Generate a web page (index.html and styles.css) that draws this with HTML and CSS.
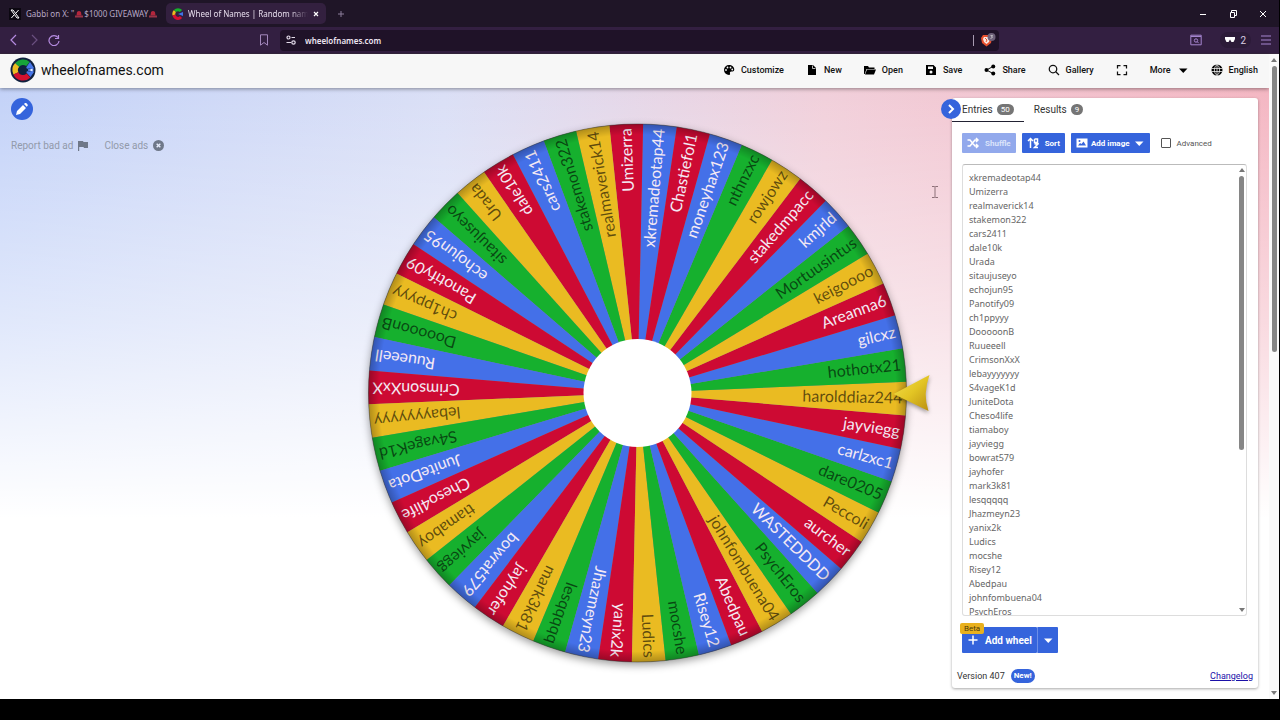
FILE: index.html
```html
<!DOCTYPE html>
<html lang="en">
<head>
    <meta charset="UTF-8">
    <meta name="viewport" content="width=device-width, initial-scale=1.0">
    <title>Wheel of Names | Random name picker</title>
    <link rel="stylesheet" href="styles.css">
</head>
<body>
    <div class="tabs">
        <div class="tab">
            <svg class="tab-icon" viewBox="0 0 12 12"><rect width="12" height="12" fill="#0b0710"/><path d="M2 2h2l6 8H8zM9.600 2 6.800 5.200M5 7 2.400 10" fill="none" stroke="#fff" stroke-width="1"/></svg>
            <span>Gabbi on X: "</span>
            <svg class="siren" viewBox="0 0 8 8"><path d="M1.500 5.500 2 2q2-2 4 0l.5 3.500z" fill="#b3263c"/><path d="M0 5.500h8v2H0z" fill="#9a3347"/></svg>
            <span>$1000 GIVEAWAY</span>
            <svg class="siren" viewBox="0 0 8 8"><path d="M1.500 5.500 2 2q2-2 4 0l.5 3.500z" fill="#b3263c"/><path d="M0 5.500h8v2H0z" fill="#9a3347"/></svg>
        </div>
        <div class="tab active">
            <svg class="tab-icon" viewBox="0 0 12 12" fill="none" stroke-width="3"><path d="M2 7a4 4 0 0 1 1-4" stroke="#efb91d"/><path d="M3 3a4 4 0 0 1 6 0" stroke="#15b32b"/><path d="M2 7a4 4 0 0 0 7 2" stroke="#d50f31"/><path d="M6 6l5-2v4z" fill="#3f73ea"/></svg>
            <span class="tab-title">Wheel of Names | Random nam</span>
            <button class="plain" aria-label="Close tab"><svg width="8" height="8" viewBox="0 0 8 8"><path d="M2 2l4 4M6 2 2 6" stroke="#fff" stroke-width="1.200"/></svg></button>
        </div>
        <button class="plain new-tab" aria-label="New tab"><svg width="8" height="8" viewBox="0 0 8 8"><path d="M4 1v6M1 4h6" stroke="#8d7f9c"/></svg></button>
        <div class="window-buttons">
            <button class="plain" aria-label="Minimize"><svg width="10" height="10" viewBox="0 0 10 10"><path d="M2 5.500h6" stroke="#fff"/></svg></button>
            <button class="plain" aria-label="Restore"><svg width="10" height="10" viewBox="0 0 10 10" fill="none" stroke="#fff"><path d="M2.500 3.500h4v5h-4zM3.500 3V1.500h5v5H7"/></svg></button>
            <button class="plain" aria-label="Close"><svg width="10" height="10" viewBox="0 0 10 10"><path d="M2 2l6 6M8 2 2 8" stroke="#fff"/></svg></button>
        </div>
    </div>

    <div class="toolbar">
        <div class="toolbar-left">
            <button class="plain" aria-label="Back"><svg width="12" height="12" viewBox="0 0 12 12"><path d="M8 1 3 6l5 5" fill="none" stroke="#b58be0" stroke-width="1.200"/></svg></button>
            <button class="plain" aria-label="Forward"><svg width="12" height="12" viewBox="0 0 12 12"><path d="M4 1l5 5-5 5" fill="none" stroke="#6b5080" stroke-width="1.200"/></svg></button>
            <button class="plain" aria-label="Reload"><svg width="12" height="12" viewBox="0 0 12 12"><path d="M10 3.500A5 5 0 1 0 11 7M10.500 1v3.500H7" fill="none" stroke="#b58be0" stroke-width="1.200"/></svg></button>
            <button class="plain bookmark" aria-label="Bookmark"><svg width="12" height="12" viewBox="0 0 12 12"><path d="M2.500.8h7v10.400L6 8.500l-3.500 2.700z" fill="none" stroke="#a488bd"/></svg></button>
        </div>
        <div class="address">
            <svg width="12" height="12" viewBox="0 0 12 12" fill="none" stroke="#e4dcea" stroke-width="1.200"><circle cx="3.500" cy="3.500" r="1.500"/><path d="M6.500 3.500H10M1.500 8.500H6"/><circle cx="8.500" cy="8.500" r="1.700"/></svg>
            <input class="url" type="text" value="wheelofnames.com" aria-label="Address">
            <svg width="26" height="14" viewBox="0 0 26 14"><path d="M2.500 2v11" stroke="#a89bb1"/><path d="M12 2h7l2 3-1 5-4.500 3.500L11 10l-1-5z" fill="#e8502d"/><path d="M13 4h5l1 2-1 3-2.500 2L13 9l-1-3z" fill="#fbe9e2"/><path d="M14 5l2 2-1 2" stroke="#e8502d" fill="none"/><circle cx="20.500" cy="4" r="4" fill="#6e6179"/><path d="M19.500 2.500h2l-1 1.500h1l-2 2" fill="none" stroke="#ddd" stroke-width=".7"/></svg>
        </div>
        <div class="toolbar-right">
            <svg width="12" height="12" viewBox="0 0 12 12" fill="none" stroke="#a585cf"><path d="M.8 1.200h10.400v9.600H.8zM1 2.500h10"/><circle cx="6" cy="6.500" r="1.700"/><path d="M7.200 7.700 8.700 9.200"/></svg>
            <div class="private"><svg width="10" height="6" viewBox="0 0 10 6"><path d="M0 0h10v2L8.500 5h-2L5 2.500 3.500 5h-2L0 2z" fill="#fff"/></svg><span>2</span></div>
            <button class="plain" aria-label="Menu"><svg width="12" height="12" viewBox="0 0 12 12"><path d="M1 2h10M1 6h10M1 10h10" stroke="#a585cf" stroke-width="1.200"/></svg></button>
        </div>
    </div>

    <div class="viewport">
        <div class="page">
            <header class="app-bar">
                <a class="brand" href="#">
                    <svg width="26" height="26" viewBox="0 0 26 26"><circle cx="13" cy="13" r="12.500" fill="#10213f"/><g fill="none" stroke-width="5.500"><path d="M5.900 16.300A7.800 7.800 0 0 1 7.200 7.800" stroke="#edbd22"/><path d="M7.200 7.800A7.800 7.800 0 0 1 18 7" stroke="#17a43a"/><path d="M5.900 16.300A7.800 7.800 0 0 0 18.500 18.500" stroke="#d3112f"/></g><path d="M15 12 20 5l4 6zM15 14l9 1-3.500 5z" fill="#4876e8"/><circle cx="13" cy="13" r="4" fill="#10213f"/><path d="M18 13l5-2v4z" fill="#fff" stroke="#4876e8"/></svg>
                    <span>wheelofnames.com</span>
                </a>
                <nav class="menu">
                    <button class="menu-item"><svg class="icon" viewBox="0 0 24 24"><path d="M12 2a10 10 0 1 0 0 20c2 0 2.600-1.500 2-3-.8-2 .2-4 2.500-4H19c2 0 3.500-1.500 3.500-4C22.500 6 18 2 12 2z"/><g fill="#f7f7f7"><circle cx="6" cy="12" r="1.800"/><circle cx="9" cy="7" r="1.800"/><circle cx="15" cy="7" r="1.800"/><circle cx="18.500" cy="11" r="1.800"/></g></svg>Customize</button>
                    <button class="menu-item"><svg class="icon" viewBox="0 0 24 24"><path d="M4 2h10l6 6v14H4z"/><path d="M13 3v6h6" fill="none" stroke="#f7f7f7" stroke-width="1.500"/></svg>New</button>
                    <button class="menu-item"><svg class="icon" viewBox="0 0 24 24"><path d="M0 4h8l2 3h11v3H5L1.500 20H0zM6 11h18l-4 10H2z"/></svg>Open</button>
                    <button class="menu-item"><svg class="icon" viewBox="0 0 24 24"><path fill-rule="evenodd" d="M2 2h15l5 5v15H2zm4 3v5h10V5zm6 8a3 3 0 1 0 0 6 3 3 0 0 0 0-6z"/></svg>Save</button>
                    <button class="menu-item"><svg class="icon" viewBox="0 0 24 24"><path d="M5 12 18 5M5 12l13 7" stroke="#111" stroke-width="2"/><circle cx="5" cy="12" r="4"/><circle cx="18.500" cy="5" r="4"/><circle cx="18.500" cy="19" r="4"/></svg>Share</button>
                    <button class="menu-item"><svg class="icon" viewBox="0 0 24 24" fill="none" stroke="#111" stroke-width="2.500"><circle cx="10" cy="10" r="7.500"/><path d="M15.500 15.500 22 22"/></svg>Gallery</button>
                    <button class="menu-item" aria-label="Fullscreen"><svg class="icon" viewBox="0 0 24 24" fill="none" stroke="#111" stroke-width="2.500"><path d="M3 9V3h6M15 3h6v6M21 15v6h-6M9 21H3v-6"/></svg></button>
                    <button class="menu-item">More<svg class="icon" viewBox="0 0 24 24"><path d="M4 9h17l-8.500 9z"/></svg></button>
                    <button class="menu-item"><svg class="icon" viewBox="0 0 24 24"><circle cx="12" cy="12" r="11"/><path d="M1 9h22M1 15h22M12 1v22M12 1C5 6 5 18 12 23M12 1c7 5 7 17 0 22" fill="none" stroke="#f7f7f7" stroke-width="1.500"/></svg>English</button>
                </nav>
            </header>

            <main class="content">
                <aside class="left">
                    <button class="round-button edit" aria-label="Edit title"><svg width="12" height="12" viewBox="0 0 12 12"><path d="M0 12l1-4 6-6 3 3-6 6zM8 1l1-1q1-.3 2 .7t.7 2l-1 1z" fill="#fff"/></svg></button>
                    <div class="ad-links">
                        <a href="#">Report bad ad <svg width="10" height="10" viewBox="0 0 10 10"><path d="M0 0h5l.5 1H10v6H6l-.5-1H1.200v4H0z" fill="#6f7889"/></svg></a>
                        <a href="#">Close ads <svg width="11" height="11" viewBox="0 0 12 12"><circle cx="6" cy="6" r="6" fill="#6f7889"/><path d="M4 4l4 4M8 4 4 8" stroke="#e6ecfb" stroke-width="1.500"/></svg></a>
                    </div>
                </aside>

                <svg class="wheel" id="wheel" viewBox="0 0 629 611" role="img" aria-label="Wheel">
                    <defs>
                        <linearGradient id="gold" x1="0" y1="0" x2="1" y2="1">
                            <stop offset="0" stop-color="#f3e04e"/>
                            <stop offset="0.500" stop-color="#e3c524"/>
                            <stop offset="1" stop-color="#b98e12"/>
                        </linearGradient>
                        <radialGradient id="shade">
                            <stop offset="0.960" stop-color="#000" stop-opacity="0"/>
                            <stop offset="1" stop-color="#000" stop-opacity=".25"/>
                        </radialGradient>
                    </defs>
                    <g transform="translate(314.500 305)">
                        <circle class="wheel-shadow" r="269"/>
                        <g id="slices"></g>
                        <circle class="wheel-rim" r="269"/>
                        <circle r="54" fill="#fff"/>
                        <path class="pointer" d="M256 1 292-18Q285 1 291 18z"/>
                    </g>
                </svg>

                <section class="panel">
                    <button class="round-button collapse" aria-label="Hide panel"><svg width="8" height="10" viewBox="0 0 8 10"><path d="M2 1l4 4-4 4" fill="none" stroke="#fff" stroke-width="2"/></svg></button>
                    <div class="panel-tabs">
                        <button class="panel-tab selected">Entries <span class="count">50</span></button>
                        <button class="panel-tab">Results <span class="count">9</span></button>
                    </div>
                    <div class="actions">
                        <button class="blue" disabled><svg class="icon" viewBox="0 0 24 24" fill="none" stroke="#fff" stroke-width="3"><path d="M1 6h5l10 12h5M1 18h5L16 6h5M18 2l4 4-4 4M18 14l4 4-4 4"/></svg>Shuffle</button>
                        <button class="blue"><svg class="icon" viewBox="0 0 24 24" fill="none" stroke="#fff" stroke-width="3"><path d="M7 22V4M2 8l5-5 5 5M15 4h6v7h-6V4M15 14h7l-7 7h7"/></svg>Sort</button>
                        <button class="blue image"><svg class="icon" viewBox="0 0 24 24"><path fill-rule="evenodd" fill="#fff" d="M1 3h22v18H1zm3 14h16l-5-8-4 5-3-2zM7 6a2 2 0 1 0 0 4 2 2 0 0 0 0-4z"/></svg>Add image<svg class="icon" viewBox="0 0 24 24"><path d="M4 9h17l-8.500 9z" fill="#fff"/></svg></button>
                        <label class="advanced"><input type="checkbox">Advanced</label>
                    </div>
                    <div class="entries">
                        <textarea id="names" aria-label="Entries" spellcheck="false">xkremadeotap44
Umizerra
realmaverick14
stakemon322
cars2411
dale10k
Urada
sitaujuseyo
echojun95
Panotify09
ch1ppyyy
DooooonB
Ruueeell
CrimsonXxX
lebayyyyyyy
S4vageK1d
JuniteDota
Cheso4life
tiamaboy
jayviegg
bowrat579
jayhofer
mark3k81
lesqqqqq
Jhazmeyn23
yanix2k
Ludics
mocshe
Risey12
Abedpau
johnfombuena04
PsychEros
WASTEDDDD
aurcher
Peccoli
dare0205
carlzxc1
jayviegg
harolddiaz244
hothotx21
gilcxz
Areanna6
keigoooo
Mortuusintus
kmjrld
stakedmpacc
rowjowz
nthnzxc
moneyhax123
Chastiefol1</textarea>
                        <div class="scrollbar"><span class="arrow-up"></span><span class="track"><span class="thumb list-thumb"></span></span><span class="arrow-down"></span></div>
                    </div>
                    <div class="add-wheel">
                        <span class="beta">Beta</span>
                        <button class="blue add"><svg class="icon" viewBox="0 0 24 24"><path d="M12 3v18M3 12h18" stroke="#fff" stroke-width="3"/></svg>Add wheel</button>
                        <button class="blue more" aria-label="More options"><svg class="icon" viewBox="0 0 24 24"><path d="M4 9h17l-8.500 9z" fill="#fff"/></svg></button>
                    </div>
                    <div class="version">
                        <span>Version 407</span>
                        <span class="new-badge">New!</span>
                        <a href="#">Changelog</a>
                    </div>
                </section>
                <svg class="cursor" width="6" height="12" viewBox="0 0 6 12"><path d="M0 .5h2.500l.5.500.5-.5H6M0 11.500h2.500L3 11l.5.500H6M3 1v10" fill="none" stroke="#8d7078"/></svg>
            </main>
        </div>
        <div class="scrollbar page-scroll"><span class="arrow-up"></span><span class="track"><span class="thumb page-thumb"></span></span><span class="arrow-down"></span></div>
    </div>

    <script src="wheel.js"></script>
</body>
</html>
```

FILE: wheel.js
```js
const SVG = "http://www.w3.org/2000/svg";
const names = document.getElementById("names").value.split("\n");
const slices = document.getElementById("slices");
const colors = ["blue", "red", "yellow", "green"];
const radius = 269;
const step = 360 / names.length;
const start = -85.2; // angle of the first entry

function point(angle) {
    const a = angle * Math.PI / 180;
    return (radius * Math.cos(a)).toFixed(2) + " " + (radius * Math.sin(a)).toFixed(2);
}

// entries run counter-clockwise from the first one
names.forEach((name, i) => {
    const angle = start - i * step;
    const color = colors[i % colors.length];

    const path = document.createElementNS(SVG, "path");
    path.setAttribute("d", `M0 0L${point(angle - step / 2)}A${radius} ${radius} 0 0 1 ${point(angle + step / 2)}z`);
    path.setAttribute("class", "slice-" + color);
    slices.appendChild(path);

    const text = document.createElementNS(SVG, "text");
    text.setAttribute("x", 265);
    text.setAttribute("y", 5);
    text.setAttribute("transform", `rotate(${angle})`);
    text.setAttribute("class", "name on-" + color);
    text.textContent = name;
    slices.appendChild(text);
});
```

FILE: styles.css
```css
* { box-sizing: border-box; }
body { margin: 0; height: 100vh; display: flex; flex-direction: column; padding: 0 1px 21px 0; background: #000; font-family: Roboto, sans-serif; font-size: 10px; color: #222; overflow: hidden; }
button { font-family: inherit; font-size: inherit; border: none; padding: 0; cursor: pointer; }
svg { flex: none; }
.plain { background: none; display: flex; align-items: center; }
.icon { width: 12px; height: 12px; }

/* browser */
.tabs { height: 27px; display: flex; align-items: center; background: #1f1527; color: #b9a9c6; font-family: "Noto Sans", sans-serif; font-size: 8px; white-space: nowrap; }
.tab { width: 166px; height: 21px; display: flex; align-items: center; gap: 1px; padding: 0 9px; }
.tab.active { width: 160px; padding: 0 6px; gap: 4px; background: #33203f; color: #e6dcec; border-radius: 5px; }
.tab-icon { width: 12px; height: 12px; margin-right: 4px; }
.tab.active .tab-icon { margin-right: 0; }
.tab-title { flex: 1; min-width: 0; -webkit-mask: linear-gradient(to right, #000 85%, transparent); mask: linear-gradient(to right, #000 85%, transparent); }
.siren { width: 8px; height: 8px; }
.new-tab { margin-left: 11px; }
.window-buttons { margin-left: auto; display: flex; gap: 20px; padding-right: 11px; }
.toolbar { height: 27px; display: flex; align-items: center; background: #331f41; border-bottom: 1px solid #37263f; }
.toolbar-left { width: 280px; display: flex; align-items: center; gap: 8px; padding: 0 10px 0 8px; }
.bookmark { margin-left: auto; }
.address { flex: 1; height: 21px; display: flex; align-items: center; gap: 8px; padding: 0 2px 0 5px; background: #1f1228; border-radius: 4px; }
.url { flex: 1; min-width: 0; padding: 0; border: none; outline: none; background: none; color: #eee6f2; font: 600 8px "Noto Sans", sans-serif; }
.toolbar-right { width: 280px; display: flex; align-items: center; justify-content: flex-end; gap: 9px; padding-right: 7px; }
.private { display: flex; align-items: center; gap: 5px; height: 16px; padding: 0 5px; margin-left: 9px; border-radius: 8px; background: #2c1b38; color: #d9cde2; }

/* page */
.viewport { flex: 1; min-height: 0; display: flex; background: #fff; }
.page { flex: 1; display: flex; flex-direction: column; background: linear-gradient(to bottom, rgba(255, 255, 255, 0) 5%, rgba(255, 255, 255, .5) 42%, #fff 72%), linear-gradient(to right, #c3d2f8, #dadff6 35%, #f1cfda 65%, #f4b6c2); }
.app-bar { height: 34px; display: flex; align-items: center; padding: 0 11px 2px 10px; background: #f7f7f7; box-shadow: 0 1px 4px rgba(0, 0, 0, .4); }
.brand { display: flex; align-items: center; gap: 5px; font-size: 14px; color: #111; text-decoration: none; }
.menu { margin-left: auto; display: flex; gap: 22px; }
.menu-item { display: flex; align-items: center; gap: 6px; background: none; font-size: 9px; font-weight: 500; color: #111; }
.content { flex: 1; min-height: 0; display: grid; grid-template-columns: 323px 1fr 306px; padding-right: 11px; position: relative; }
.left { padding: 10px 11px; }
.round-button { width: 20px; height: 20px; display: flex; align-items: center; justify-content: center; border-radius: 50%; background: #3564dc; }
.edit { width: 22px; height: 22px; }
.ad-links { display: flex; gap: 16px; margin-top: 20px; }
.ad-links a { display: flex; align-items: center; gap: 5px; color: #929aaa; text-decoration: none; }

.wheel { width: 100%; height: 100%; min-height: 0; }
.wheel-shadow { fill: #888; filter: drop-shadow(0 3px 4px rgba(0, 0, 0, .4)); }
.wheel-rim { fill: url(#shade); stroke: rgba(40, 40, 40, .4); stroke-width: 1px; }
.slice-red { fill: #cd0a33; }
.slice-blue { fill: #4470e8; }
.slice-yellow { fill: #eabb22; }
.slice-green { fill: #16b02e; }
.name { font-family: Lato, sans-serif; font-size: 16px; text-anchor: end; }
.on-red, .on-blue { fill: #f4e9f4; }
.on-yellow, .on-green { fill: rgba(0, 0, 0, .6); }
.pointer { fill: url(#gold); filter: drop-shadow(0 2px 2px rgba(0, 0, 0, .4)); }
.cursor { position: absolute; left: 932px; top: 98px; }

.panel { position: relative; margin: 10px 0 11px; padding-bottom: 5px; display: flex; flex-direction: column; background: #fff; border-radius: 3px; box-shadow: 0 1px 3px rgba(0, 0, 0, .35); }
.collapse { position: absolute; left: -11px; top: 1px; }
.panel-tabs { display: flex; height: 24px; }
.panel-tab { display: flex; align-items: center; gap: 4px; padding: 0 10px; border-bottom: 1px solid transparent; background: none; color: #333; }
.panel-tab.selected { border-bottom-color: #223; }
.count { padding: 0 4px; border-radius: 6px; background: #757575; color: #fff; font-size: 8px; line-height: 11px; }
.actions { display: flex; gap: 6px; padding: 11px 10px; }
.blue { display: flex; align-items: center; gap: 6px; height: 20px; padding: 0 5px; background: #3564dc; color: #fff; font-size: 8px; font-weight: 700; border-radius: 1px; }
.blue:disabled { background: #92a9ec; color: #dbe3fa; }
.image { gap: 3px; }
.advanced { display: flex; align-items: center; gap: 6px; padding-left: 5px; color: #555; font-size: 8px; }
.advanced input { appearance: none; width: 10px; height: 10px; margin: 0; border: 1px solid #555; border-radius: 1px; }
.entries { flex: 1; min-height: 0; display: flex; margin: 0 11px 0 10px; border: 1px solid #ddd; border-top-color: #bbb; border-radius: 3px; }
textarea { flex: 1; min-width: 0; padding: 6px; border: none; outline: none; resize: none; overflow: hidden; background: none; color: #666; font: 9px/14px "Noto Sans", sans-serif; }
.add-wheel { position: relative; display: flex; margin: 11px 10px 0; }
.add-wheel .blue { height: 26px; font-size: 10px; }
.add-wheel .more { border-left: 1px solid #6c8fe8; padding: 0 4px; }
.beta { position: absolute; left: -2px; top: -4px; padding: 0 4px; border-radius: 2px; background: #e9b11e; color: #503c0a; font-size: 8px; line-height: 11px; }
.version { display: flex; align-items: center; gap: 6px; margin-top: 16px; padding: 0 5px; color: #333; font-size: 9px; }
.new-badge { padding: 0 3px; border-radius: 8px; background: #3564dc; color: #fff; font-size: 8px; font-weight: 700; line-height: 14px; }
.version a { margin-left: auto; color: #1a10a8; }

.scrollbar { width: 9px; display: flex; flex-direction: column; align-items: center; padding: 3px 0; }
.page-scroll { width: 10px; padding: 4px 0; background: #fafafa; }
.track { flex: 1; width: 5px; margin: 4px 0; }
.thumb { display: block; border-radius: 3px; background: #868686; }
.list-thumb { height: 64%; }
.page-thumb { height: 46%; }
.arrow-up, .arrow-down { border: 3px solid transparent; }
.arrow-up { border-top: none; border-bottom: 4px solid #777; }
.arrow-down { border-bottom: none; border-top: 4px solid #777; }
```
